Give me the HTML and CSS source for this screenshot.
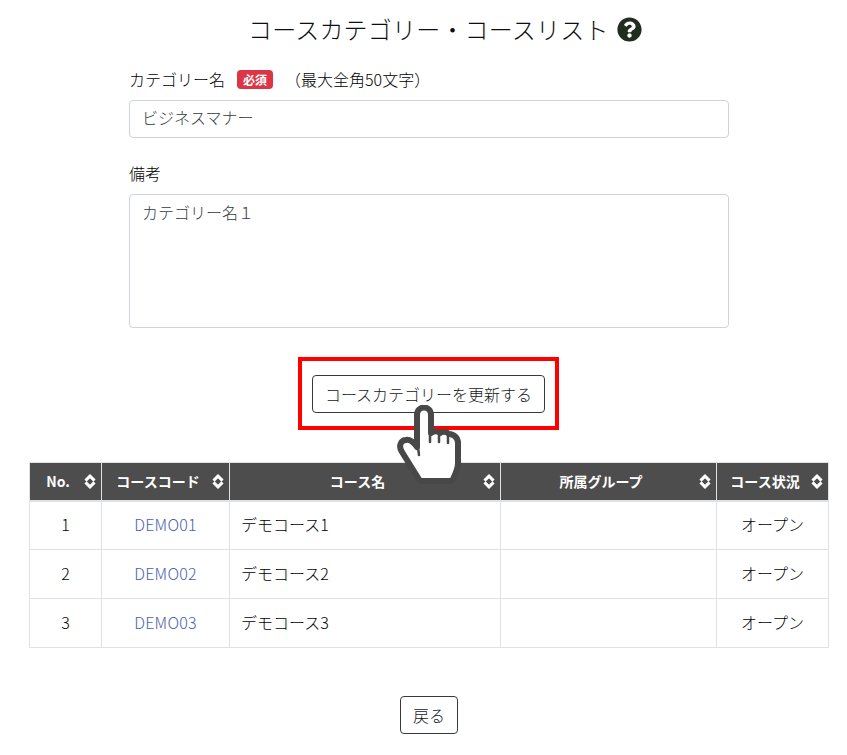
FILE: index.html
```html
<!DOCTYPE html>
<html lang="ja">
<head>
<meta charset="utf-8">
<title>コースカテゴリー・コースリスト</title>
<link rel="stylesheet" href="styles.css">
</head>
<body>
<svg class="defs" aria-hidden="true"><symbol id="sort" viewBox="0 0 12 15"><path fill="none" stroke="#fff" stroke-width="3" d="M1.5 6.6 6 2.1l4.5 4.5M1.5 8.4 6 12.900l4.500-4.500"/></symbol></svg>
<main class="page">
  <h1 class="title">コースカテゴリー・コースリスト
    <svg class="help" viewBox="0 0 512 512" aria-hidden="true"><path fill="#212d1e" d="M504 256c0 137-111 248-248 248S8 393 8 256 119 8 256 8s248 111 248 248zM263 90c-54 0-89 23-116 63-4 5-3 12 3 16l35 26c5 4 13 3 17-2 18-23 30-36 57-36 20 0 45 13 45 33 0 15-12 22-32 33-23 13-54 30-54 71v4c0 7 5 12 12 12h56c7 0 12-5 12-12v-1c0-29 83-30 83-106 0-58-60-101-118-101zm-7 244c-25 0-46 21-46 46s21 46 46 46 46-21 46-46-21-46-46-46z"/></svg>
  </h1>
  <form class="form">
    <div class="label-row"><span>カテゴリー名</span><span class="badge">必須</span><span class="hint">（最大全角50文字）</span></div>
    <div class="input">ビジネスマナー</div>
    <div class="label-row second"><span>備考</span></div>
    <div class="input area">カテゴリー名１</div>
  </form>
  <div class="action">
    <div class="highlight">
      <button class="btn update" type="button">コースカテゴリーを更新する</button>
      <svg class="hand" viewBox="0 0 64 80" aria-hidden="true">
        <path fill="#fff" stroke="#484848" stroke-width="6" stroke-linejoin="round" d="M23 76 5 47C1 41 4 35 9 35c4-1 8 3 11 7V10C20 0 34 0 34 10v18c3-2 7-2 9 0 3-2 7-1 9 1 5 0 9 4 9 9v20c0 7-3 12-6 18z"/>
        <path fill="none" stroke="#484848" stroke-width="2.500" stroke-linecap="round" d="M33 28v9M42 28v9M51 30v8M21 42l1 8"/>
      </svg>
    </div>
  </div>
  <table class="table">
    <colgroup><col class="c1"><col class="c2"><col class="c3"><col class="c4"><col class="c5"></colgroup>
    <thead>
      <tr>
        <th>No.<svg class="sort"><use href="#sort"/></svg></th>
        <th>コースコード<svg class="sort"><use href="#sort"/></svg></th>
        <th>コース名<svg class="sort"><use href="#sort"/></svg></th>
        <th>所属グループ<svg class="sort"><use href="#sort"/></svg></th>
        <th>コース状況<svg class="sort"><use href="#sort"/></svg></th>
      </tr>
    </thead>
    <tbody>
      <tr><td class="center">1</td><td class="center"><a class="code" href="#">DEMO01</a></td><td>デモコース1</td><td></td><td class="center">オープン</td></tr>
      <tr><td class="center">2</td><td class="center"><a class="code" href="#">DEMO02</a></td><td>デモコース2</td><td></td><td class="center">オープン</td></tr>
      <tr><td class="center">3</td><td class="center"><a class="code" href="#">DEMO03</a></td><td>デモコース3</td><td></td><td class="center">オープン</td></tr>
    </tbody>
  </table>
  <div class="back"><button class="btn" type="button">戻る</button></div>
</main>
</body>
</html>
```

FILE: styles.css
```css
* { box-sizing: border-box; }
html, body { margin: 0; background: #fff; }
body {
  font-family: "Noto Sans CJK JP", "Noto Sans", sans-serif;
  font-weight: 400;
  color: #212529;
  font-size: 16px;
  line-height: 24px;
  height: 755px;
  overflow: hidden;
}
.defs { display: none; }
.page { width: 800px; margin-left: 29px; padding-top: 11px; }
.title {
  margin: 0 0 0 219px;
  height: 36px;
  display: flex;
  align-items: center;
  gap: 8px;
  font-size: 24px;
  font-weight: 300;
  letter-spacing: .2px;
  line-height: 36px;
  white-space: nowrap;
  color: #0c0e10;
}
.help { width: 25px; height: 25px; }
.form { width: 600px; margin: 21px auto 0; }
.label-row { display: flex; align-items: center; height: 24px; padding-bottom: 2px; margin-bottom: 8px; font-weight: 300; color: #000; }
.label-row.second { margin-top: 24px; padding-bottom: 3px; }
.badge {
  background: #dc3545; color: #fff;
  font-size: 12px; font-weight: 700; line-height: 19px; height: 19px;
  padding: 0 6px; border-radius: 4px; margin-left: 12px;
}
.hint { margin-left: 12px; }
.input {
  height: 38px;
  border: 1px solid #ced4da;
  border-radius: 4px;
  padding: 4px 12px 8px;
  color: #343a40;
  font-weight: 300;
  line-height: 24px;
}
.input.area { height: 134px; padding-top: 5px; }
.action { display: flex; justify-content: center; margin-top: 29px; }
.highlight {
  position: relative;
  width: 261px; height: 73px;
  margin-right: 2px;
  border: 4px solid #f00;
  display: flex; align-items: center; justify-content: center;
}
.btn {
  font-family: inherit;
  font-weight: 300;
  background: #fff;
  color: #14171a;
  border: 1px solid #343a40;
  border-radius: 4px;
  font-size: 16px;
  line-height: 24px;
  height: 38px;
  padding: 0 12px;
  white-space: nowrap;
}
.update { margin: 1px 0 0 1px; }
.hand { position: absolute; left: 95px; top: 44px; width: 64px; height: 80px; z-index: 2; }
.table {
  width: 800px;
  margin-top: 32px;
  border-collapse: collapse;
  table-layout: fixed;
}
.c1 { width: 72px; } .c2 { width: 128px; } .c3 { width: 271px; } .c4 { width: 216px; } .c5 { width: 112px; }
th {
  position: relative;
  height: 38px;
  background: #4d4d4d;
  color: #fff;
  border: 1px solid #dee2e6;
  border-bottom-width: 2px;
  font-size: 14px;
  font-weight: 700;
  text-align: center;
  padding: 0 27px 0 12px;
  white-space: nowrap;
}
.sort { position: absolute; right: 5px; top: 11px; width: 12px; height: 15px; }
td {
  height: 49px;
  border: 1px solid #dee2e6;
  padding: 0 11px 2px;
  font-weight: 300;
  color: #000;
}
.center { text-align: center; }
.code { color: #4a62ad; text-decoration: none; letter-spacing: .2px; }
.back { display: flex; justify-content: center; margin-top: 48px; }
```
